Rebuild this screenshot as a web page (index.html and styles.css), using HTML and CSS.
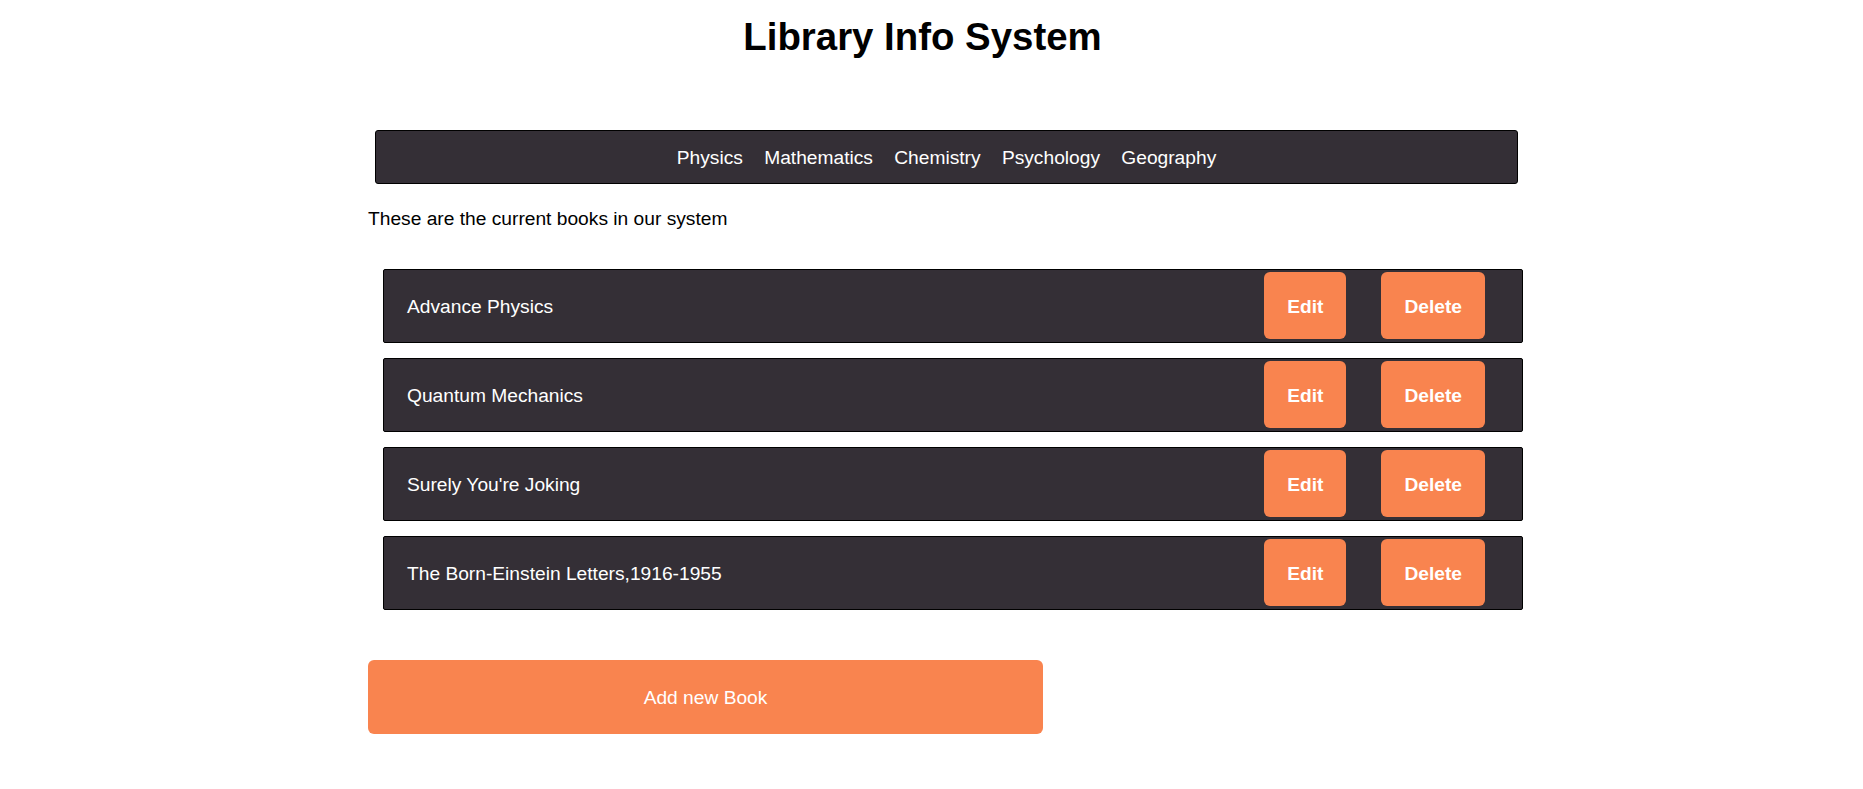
FILE: index.html
```html
<!DOCTYPE html>
<html lang="en">
<head>
<meta charset="utf-8">
<title>Library Info System</title>
<link rel="stylesheet" href="styles.css">
</head>
<body>
<header class="page-header">
  <h1 class="title">Library Info System</h1>
</header>
<main class="content">
  <nav class="topics">
    <a class="topic" href="#">Physics</a>
    <a class="topic" href="#">Mathematics</a>
    <a class="topic" href="#">Chemistry</a>
    <a class="topic" href="#">Psychology</a>
    <a class="topic" href="#">Geography</a>
  </nav>
  <p class="intro">These are the current books in our system</p>
  <ul class="books">
    <li class="book">
      <span class="book-title">Advance Physics</span>
      <div class="actions"><button class="btn">Edit</button><button class="btn">Delete</button></div>
    </li>
    <li class="book">
      <span class="book-title">Quantum Mechanics</span>
      <div class="actions"><button class="btn">Edit</button><button class="btn">Delete</button></div>
    </li>
    <li class="book">
      <span class="book-title">Surely You're Joking</span>
      <div class="actions"><button class="btn">Edit</button><button class="btn">Delete</button></div>
    </li>
    <li class="book">
      <span class="book-title">The Born-Einstein Letters,1916-1955</span>
      <div class="actions"><button class="btn">Edit</button><button class="btn">Delete</button></div>
    </li>
  </ul>
  <button class="add-btn">Add new Book</button>
</main>
</body>
</html>
```
FILE: styles.css
```css
* { box-sizing: border-box; }

html, body {
  margin: 0;
  padding: 0;
  background: #ffffff;
}

body {
  font-family: "Liberation Sans", Arial, sans-serif;
  font-size: 19.2px;
  line-height: 22px;
  color: #000;
}

.page-header {
  padding: 15px 18px 0 0;
}

.title {
  margin: 0;
  text-align: center;
  font-size: 38.4px;
  line-height: 44px;
  font-weight: bold;
}

.content {
  margin-left: 368px;
  width: 1163px;
}

.topics {
  margin: 71px 0 0 7px;
  width: 1143px;
  height: 54px;
  padding-top: 2px;
  background: #342f36;
  border: 1px solid #000;
  border-radius: 3px;
  display: flex;
  justify-content: center;
  align-items: center;
  gap: 21.3px;
}

.topic {
  color: #fff;
  text-decoration: none;
}

.intro {
  margin: 24px 0 0 0;
}

.books {
  list-style: none;
  margin: 39px 0 0 15px;
  padding: 0;
  width: 1140px;
  display: flex;
  flex-direction: column;
  gap: 15px;
}

.book {
  height: 74px;
  background: #342f36;
  border: 1px solid #000;
  border-radius: 2px;
  display: flex;
  align-items: center;
  justify-content: space-between;
  padding: 0 37px 0 23px;
  color: #fff;
}

.book-title {
  padding-top: 2px;
}

.actions {
  display: flex;
  gap: 35px;
  align-items: center;
  margin-top: -1px;
}

.btn {
  height: 67px;
  padding: 2px 23px 0;
  border: none;
  border-radius: 6px;
  background: #f9844f;
  color: #fff;
  font-family: inherit;
  font-size: 19.2px;
  font-weight: bold;
  line-height: 22px;
  cursor: pointer;
}

.add-btn {
  display: block;
  margin-top: 50px;
  width: 675px;
  height: 74px;
  padding-top: 2px;
  border: none;
  border-radius: 6px;
  background: #f9844f;
  color: #fff;
  font-family: inherit;
  font-size: 19.2px;
  line-height: 22px;
  cursor: pointer;
}
```
